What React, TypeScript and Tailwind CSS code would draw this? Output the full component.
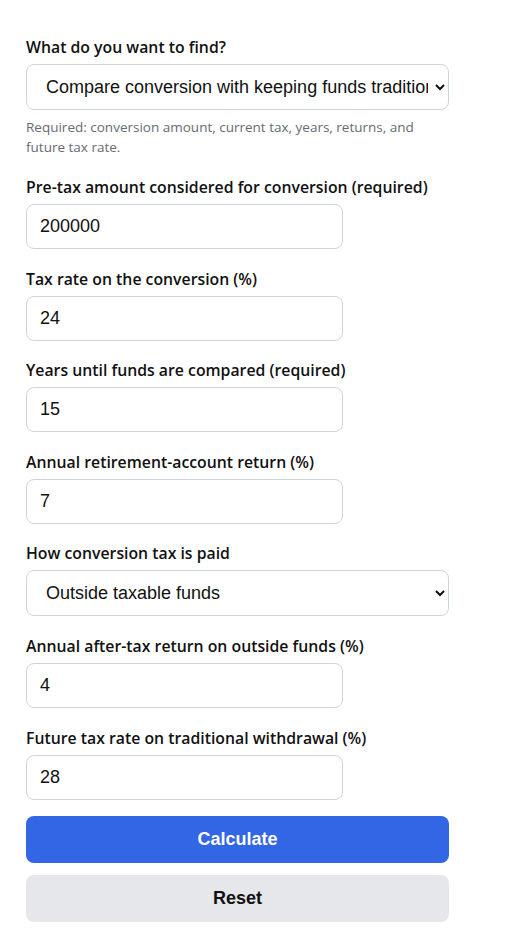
import { useState } from "react"

type Field = {
  id: string
  label: string
  value: string
}

const fieldsTop: Field[] = [
  { id: "amount", label: "Pre-tax amount considered for conversion (required)", value: "200000" },
  { id: "taxNow", label: "Tax rate on the conversion (%)", value: "24" },
  { id: "years", label: "Years until funds are compared (required)", value: "15" },
  { id: "ret", label: "Annual retirement-account return (%)", value: "7" },
]

const fieldsBottom: Field[] = [
  { id: "outside", label: "Annual after-tax return on outside funds (%)", value: "4" },
  { id: "taxLater", label: "Future tax rate on traditional withdrawal (%)", value: "28" },
]

function NumberField({ field }: { field: Field }) {
  const [val, setVal] = useState(field.value)
  return (
    <div className="flex flex-col">
      <label
        htmlFor={field.id}
        className="font-['Open_Sans',sans-serif] text-[15.8px] font-semibold leading-6 text-[#111]"
      >
        {field.label}
      </label>
      <input
        id={field.id}
        value={val}
        onChange={(e) => setVal(e.target.value)}
        className="mt-[5px] h-[45px] w-[317px] rounded-lg border border-[#cfd4dc] bg-white px-[13px] font-['Liberation_Sans',Arial,sans-serif] text-[18px] text-[#111] outline-none"
      />
    </div>
  )
}

export default function App() {
  const [mode, setMode] = useState("compare")
  const [payFrom, setPayFrom] = useState("outside")

  return (
    <div className="min-h-[932px] w-full bg-white px-[26px] pt-[35px] pb-4">
      <div className="flex w-[423px] flex-col">
        {/* goal select */}
        <label className="font-['Open_Sans',sans-serif] text-[15.8px] font-semibold leading-6 text-[#111]">
          What do you want to find?
        </label>
        <select
          value={mode}
          onChange={(e) => setMode(e.target.value)}
          className="mt-[5px] h-[46px] w-full rounded-lg border border-[#cfd4dc] bg-white pl-[15px] pr-1 font-['Liberation_Sans',Arial,sans-serif] text-[18px] text-[#111] outline-none"
        >
          <option value="compare">Compare conversion with keeping funds traditional</option>
        </select>
        <p className="mt-[7px] font-['Open_Sans',sans-serif] text-[13.5px] leading-5 text-[#666b73]">
          Required: conversion amount, current tax, years, returns, and future tax rate.
        </p>

        <div className="mt-[18px] flex flex-col gap-[17.6px]">
          {fieldsTop.map((f) => (
            <NumberField key={f.id} field={f} />
          ))}

          {/* how tax is paid */}
          <div className="flex flex-col">
            <label className="font-['Open_Sans',sans-serif] text-[15.8px] font-semibold leading-6 text-[#111]">
              How conversion tax is paid
            </label>
            <select
              value={payFrom}
              onChange={(e) => setPayFrom(e.target.value)}
              className="mt-[5px] h-[46px] w-full rounded-lg border border-[#cfd4dc] bg-white pl-[15px] pr-1 font-['Liberation_Sans',Arial,sans-serif] text-[18px] text-[#111] outline-none"
            >
              <option value="outside">Outside taxable funds</option>
              <option value="inside">From the converted amount</option>
            </select>
          </div>

          {fieldsBottom.map((f) => (
            <NumberField key={f.id} field={f} />
          ))}
        </div>

        {/* actions */}
        <button className="mt-4 h-[47px] w-full rounded-lg bg-[#3366e5] font-['Liberation_Sans',Arial,sans-serif] text-[18px] font-bold text-white">
          Calculate
        </button>
        <button className="mt-3 h-[47px] w-full rounded-lg bg-[#e5e7eb] font-['Liberation_Sans',Arial,sans-serif] text-[18px] font-bold text-[#111]">
          Reset
        </button>
      </div>
    </div>
  )
}
